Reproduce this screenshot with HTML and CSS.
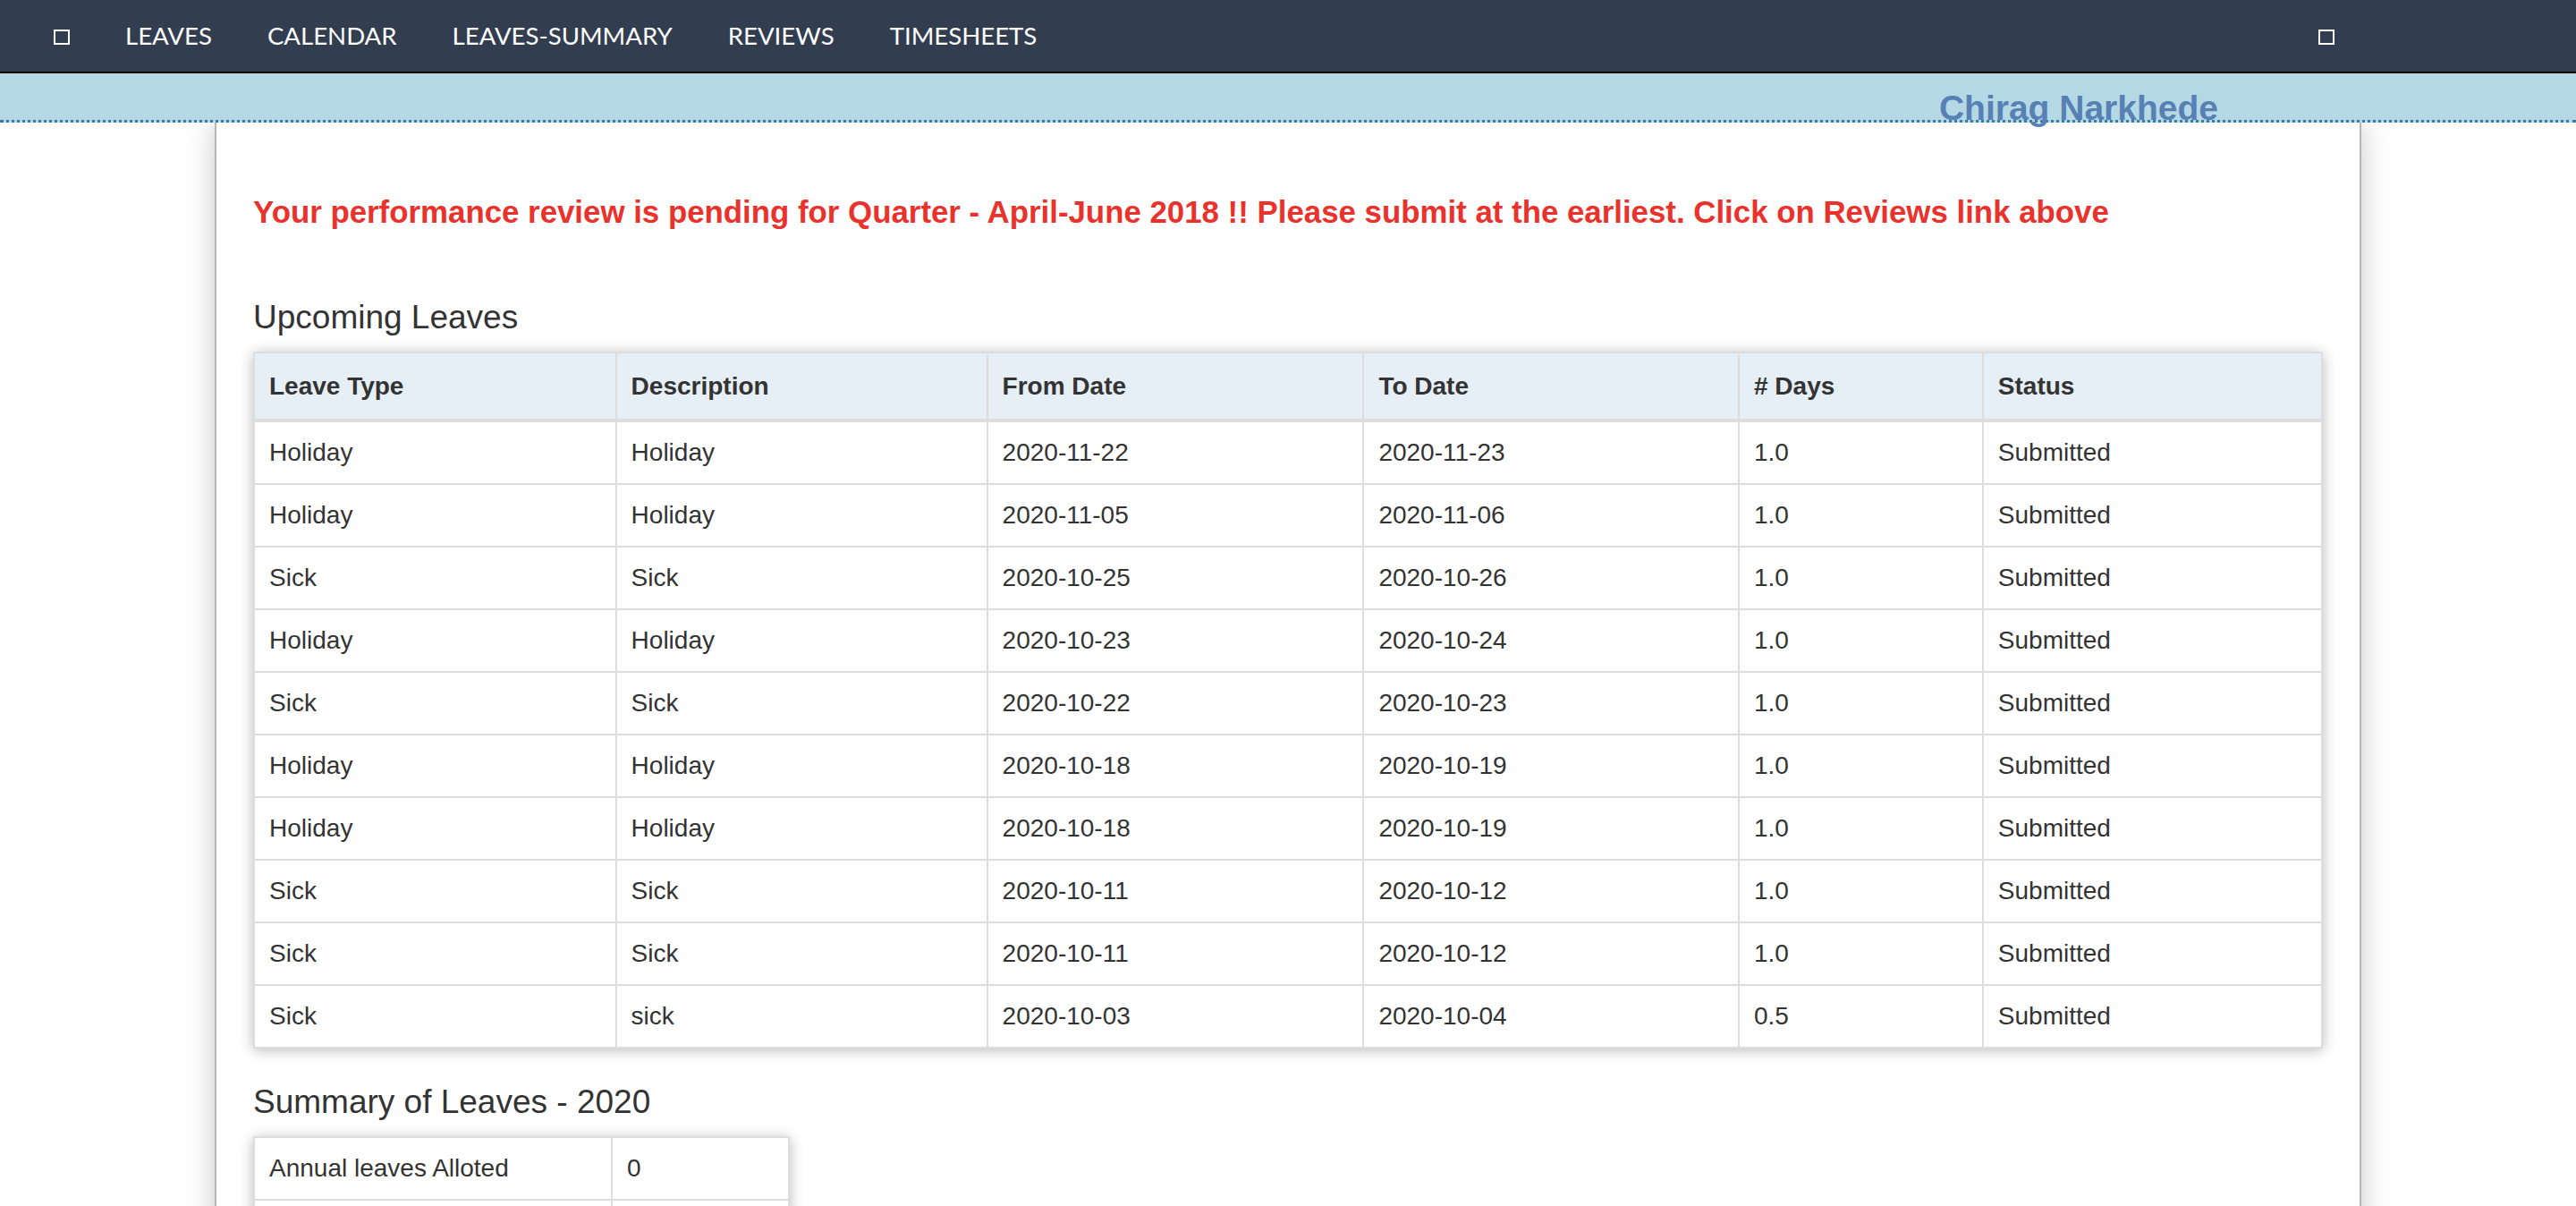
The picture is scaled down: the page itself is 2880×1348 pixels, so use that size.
FILE: index.html
```html
<!DOCTYPE html>
<html>
<head>
<meta charset="utf-8">
<title>Leaves</title>
<link rel="stylesheet" href="styles.css">
</head>
<body>
<nav class="topnav">
  <span class="nav-icon"><span class="tofu"></span></span>
  <a class="nav-link" href="#">LEAVES</a>
  <a class="nav-link" href="#">CALENDAR</a>
  <a class="nav-link" href="#">LEAVES-SUMMARY</a>
  <a class="nav-link" href="#">REVIEWS</a>
  <a class="nav-link" href="#">TIMESHEETS</a>
  <span class="nav-right"><span class="tofu"></span></span>
</nav>
<div class="userband">
  <span class="username">Chirag Narkhede</span>
</div>
<main class="page">
  <h4 class="alert">Your performance review is pending for Quarter - April-June 2018 !! Please submit at the earliest. Click on Reviews link above</h4>
  <h3 class="section-title">Upcoming Leaves</h3>
  <table class="grid leaves">
    <thead>
      <tr><th class="c1">Leave Type</th><th class="c2">Description</th><th class="c3">From Date</th><th class="c4">To Date</th><th class="c5"># Days</th><th class="c6">Status</th></tr>
    </thead>
    <tbody>
      <tr><td>Holiday</td><td>Holiday</td><td>2020-11-22</td><td>2020-11-23</td><td>1.0</td><td>Submitted</td></tr>
      <tr><td>Holiday</td><td>Holiday</td><td>2020-11-05</td><td>2020-11-06</td><td>1.0</td><td>Submitted</td></tr>
      <tr><td>Sick</td><td>Sick</td><td>2020-10-25</td><td>2020-10-26</td><td>1.0</td><td>Submitted</td></tr>
      <tr><td>Holiday</td><td>Holiday</td><td>2020-10-23</td><td>2020-10-24</td><td>1.0</td><td>Submitted</td></tr>
      <tr><td>Sick</td><td>Sick</td><td>2020-10-22</td><td>2020-10-23</td><td>1.0</td><td>Submitted</td></tr>
      <tr><td>Holiday</td><td>Holiday</td><td>2020-10-18</td><td>2020-10-19</td><td>1.0</td><td>Submitted</td></tr>
      <tr><td>Holiday</td><td>Holiday</td><td>2020-10-18</td><td>2020-10-19</td><td>1.0</td><td>Submitted</td></tr>
      <tr><td>Sick</td><td>Sick</td><td>2020-10-11</td><td>2020-10-12</td><td>1.0</td><td>Submitted</td></tr>
      <tr><td>Sick</td><td>Sick</td><td>2020-10-11</td><td>2020-10-12</td><td>1.0</td><td>Submitted</td></tr>
      <tr><td>Sick</td><td>sick</td><td>2020-10-03</td><td>2020-10-04</td><td>0.5</td><td>Submitted</td></tr>
    </tbody>
  </table>
  <h3 class="section-title summary-title">Summary of Leaves - 2020</h3>
  <table class="grid summary">
    <tbody>
      <tr><td class="s1">Annual leaves Alloted</td><td class="s2">0</td></tr>
      <tr><td class="s1">Leaves Taken</td><td class="s2">9.5</td></tr>
      <tr><td class="s1">Leaves Remaining</td><td class="s2">-9.5</td></tr>
    </tbody>
  </table>
</main>
</body>
</html>
```

FILE: styles.css
```css
html, body {
  margin: 0;
  padding: 0;
  background: #ffffff;
}

body {
  font-family: "Liberation Sans", Arial, Helvetica, sans-serif;
  color: #333333;
}

.topnav {
  display: flex;
  align-items: center;
  height: 80px;
  background: #323e4f;
  border-bottom: 2px solid #000000;
  padding-left: 29px;
}

.nav-icon {
  display: flex;
  align-items: center;
  padding: 0 31px;
}

.tofu {
  display: block;
  width: 14px;
  height: 13px;
  border: 2px solid #ffffff;
  margin-top: 3px;
}

.nav-link {
  display: block;
  padding: 0 31px;
  color: #ffffff;
  text-decoration: none;
  font-family: "Lato", "Open Sans", sans-serif;
  font-size: 27.6px;
  line-height: 80px;
}

.nav-right {
  margin-left: auto;
  padding-right: 270px;
  display: flex;
  align-items: center;
}

.userband {
  position: relative;
  z-index: 1;
  height: 55px;
  background: #b5d9e4;
  border-bottom: 3px dotted #3a7ca6;
  display: flex;
  justify-content: flex-end;
  align-items: flex-start;
  padding-top: 19px;
  padding-right: 400px;
  box-sizing: border-box;
}

.username {
  font-size: 39px;
  line-height: 1;
  font-weight: bold;
  color: #5781b4;
  white-space: nowrap;
}

.page {
  width: 2400px;
  box-sizing: border-box;
  margin: 0 auto;
  padding: 80px 41px 200px;
  background: #ffffff;
  border-left: 2px solid #b6b6b6;
  border-right: 2px solid #b6b6b6;
  box-shadow: 0 0 30px rgba(0, 0, 0, 0.22);
  min-height: 1400px;
}

.alert {
  margin: 0;
  font-size: 34.85px;
  line-height: 40px;
  font-weight: bold;
  color: #e9322b;
}

.section-title {
  margin: 78px 0 18px;
  font-size: 37px;
  line-height: 40px;
  font-weight: normal;
  color: #333333;
}

.summary-title {
  margin-top: 40px;
}

.grid {
  border-collapse: collapse;
  table-layout: fixed;
  border: 2px solid #cccccc;
  box-shadow: 0 2px 14px rgba(0, 0, 0, 0.28);
  font-size: 28px;
  line-height: 40px;
  color: #333333;
}

.grid th,
.grid td {
  box-sizing: border-box;
  border: 2px solid #dddddd;
  padding: 14px 16px;
  text-align: left;
  vertical-align: middle;
}

.grid th {
  background: #e6eff6;
  font-weight: bold;
  padding: 17px 16px 16px;
  border-bottom: 4px solid #dddddd;
}

.leaves {
  width: 100%;
}

.c1 { width: 17.5%; }
.c2 { width: 17.95%; }
.c3 { width: 18.2%; }
.c4 { width: 18.15%; }
.c5 { width: 11.8%; }
.c6 { width: 16.4%; }

.summary {
  width: 598px;
}

.s1 { width: 400px; }
.s2 { width: 198px; }
```
